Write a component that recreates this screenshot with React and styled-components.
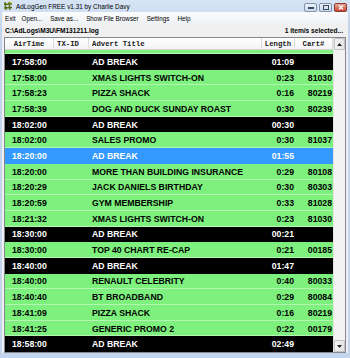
import styled, { createGlobalStyle } from "styled-components";

const GlobalStyle = createGlobalStyle`
  html, body {
    margin: 0;
    padding: 0;
    width: 350px;
    height: 358px;
    overflow: hidden;
    background: #c2d5ec;
  }
  * {
    box-sizing: border-box;
  }
`;

const COLS = "49px 35px 173px 33px 38px";

const Window = styled.div`
  width: 350px;
  height: 358px;
  display: flex;
  flex-direction: column;
  background: linear-gradient(#d7e4f4, #c2d5ec 30px);
  padding: 0 3px 5px;
  font-family: "Liberation Sans", Arial, sans-serif;
`;

const TitleBar = styled.div`
  height: 13px;
  display: flex;
  align-items: center;
  gap: 3px;
  padding-left: 0;
`;

const Title = styled.span`
  font-size: 6.4px;
  color: #000;
  flex: 1;
  white-space: nowrap;
`;

const Controls = styled.div`
  display: flex;
  gap: 2px;
  align-self: flex-start;
  padding-top: 3px;
  margin-right: 0;
`;

const CtlButton = styled.div`
  width: 13px;
  height: 9px;
  border: 1px solid ${(p) => (p.$close ? "#8c3b30" : "#7f93ad")};
  border-radius: 2px;
  background: ${(p) =>
    p.$close
      ? "linear-gradient(#e9a99a, #c8452f)"
      : "linear-gradient(#eef3fa, #c9d8ea)"};
  display: flex;
  align-items: center;
  justify-content: center;
`;

const Body = styled.div`
  flex: 1;
  display: flex;
  flex-direction: column;
  background: #f0f0f0;
  margin: 0 -1px;
  padding: 0 1px;
`;

const MenuBar = styled.div`
  height: 12px;
  display: flex;
  align-items: center;
  background: linear-gradient(#fbfcfd, #eef1f5);
  font-size: 6.3px;
  color: #000;
`;

const MenuItem = styled.span`
  padding: 0 ${(p) => p.$pad || 4}px;
  white-space: nowrap;
`;

const PathBar = styled.div`
  height: 13px;
  display: flex;
  align-items: center;
  justify-content: space-between;
  padding: 0 4px 0 2px;
  font-size: 6.6px;
  font-weight: bold;
  color: #000;
`;

const ListFrame = styled.div`
  flex: 1;
  margin: 0 1px 0 1px;
  border: 1px solid #828790;
  background: #fff;
  display: flex;
  overflow: hidden;
`;

const ListMain = styled.div`
  width: 328px;
  display: flex;
  flex-direction: column;
`;

const Header = styled.div`
  height: 12px;
  display: grid;
  grid-template-columns: ${COLS};
  background: linear-gradient(#ffffff, #f3f4f6);
  border-bottom: 1px solid #d5d5d5;
`;

const HeadCell = styled.div`
  display: flex;
  align-items: center;
  justify-content: ${(p) => (p.$center ? "center" : "flex-start")};
  padding-left: ${(p) => (p.$center ? 0 : 3)}px;
  border-right: 1px solid #dcdcdc;
  font-family: "Liberation Mono", "DejaVu Sans Mono", monospace;
  font-weight: bold;
  font-size: 7.3px;
  color: #1a1a1a;
  white-space: nowrap;
`;

const Rows = styled.div`
  flex: 1;
  overflow: hidden;
`;

const ROW_BG = { ad: "#7ef07e", break: "#000", selected: "#3399ff" };

const Row = styled.div`
  height: 15.7px;
  display: grid;
  grid-template-columns: ${COLS};
  align-items: center;
  background: ${(p) => ROW_BG[p.$kind]};
  color: ${(p) => (p.$kind === "ad" ? "#000" : "#fff")};
  box-shadow: ${(p) =>
    p.$kind === "ad" ? "inset 0 -1px 0 #b2f6b2" : "none"};
  font-weight: bold;
  font-size: 8.7px;
  white-space: nowrap;
  &:first-child {
    margin-top: -11.7px;
  }
`;

const Cell = styled.div`
  overflow: hidden;
  text-align: ${(p) => p.$align || "left"};
  padding: ${(p) => p.$pad || "0"};
`;

const Scrollbar = styled.div`
  flex: 1;
  display: flex;
  flex-direction: column;
  background: #f3f3f3;
  border-left: 1px solid #e3e3e3;
`;

const ScrollTrack = styled.div`
  flex: 1;
`;

const ArrowButton = styled.div`
  height: 12px;
  display: flex;
  align-items: center;
  justify-content: center;
  background: linear-gradient(90deg, #f4f4f4, #e3e3e3);
  border: 1px solid #c3c3c3;
  border-radius: 1px;
`;

const rows = [
  { time: "17:57:29", title: "CHRISTMAS AT THE ARNDALE 250x16 30", len: "0:31", cart: "80107", kind: "ad" },
  { time: "17:58:00", title: "AD BREAK", len: "01:09", kind: "break" },
  { time: "17:58:00", title: "XMAS LIGHTS SWITCH-ON", len: "0:23", cart: "81030", kind: "ad" },
  { time: "17:58:23", title: "PIZZA SHACK", len: "0:16", cart: "80219", kind: "ad" },
  { time: "17:58:39", title: "DOG AND DUCK SUNDAY ROAST", len: "0:30", cart: "80239", kind: "ad" },
  { time: "18:02:00", title: "AD BREAK", len: "00:30", kind: "break" },
  { time: "18:02:00", title: "SALES PROMO", len: "0:30", cart: "81037", kind: "ad" },
  { time: "18:20:00", title: "AD BREAK", len: "01:55", kind: "selected" },
  { time: "18:20:00", title: "MORE THAN BUILDING INSURANCE", len: "0:29", cart: "80108", kind: "ad" },
  { time: "18:20:29", title: "JACK DANIELS BIRTHDAY", len: "0:30", cart: "80303", kind: "ad" },
  { time: "18:20:59", title: "GYM MEMBERSHIP", len: "0:33", cart: "81028", kind: "ad" },
  { time: "18:21:32", title: "XMAS LIGHTS SWITCH-ON", len: "0:23", cart: "81030", kind: "ad" },
  { time: "18:30:00", title: "AD BREAK", len: "00:21", kind: "break" },
  { time: "18:30:00", title: "TOP 40 CHART RE-CAP", len: "0:21", cart: "00185", kind: "ad" },
  { time: "18:40:00", title: "AD BREAK", len: "01:47", kind: "break" },
  { time: "18:40:00", title: "RENAULT CELEBRITY", len: "0:40", cart: "80033", kind: "ad" },
  { time: "18:40:40", title: "BT BROADBAND", len: "0:29", cart: "80084", kind: "ad" },
  { time: "18:41:09", title: "PIZZA SHACK", len: "0:16", cart: "80219", kind: "ad" },
  { time: "18:41:25", title: "GENERIC PROMO 2", len: "0:22", cart: "00179", kind: "ad" },
  { time: "18:58:00", title: "AD BREAK", len: "02:49", kind: "break" },
];

const AppIcon = () => (
  <svg width="10" height="10" viewBox="0 0 10 10">
    <path d="M2 1 L3 9 M6 1 L7 9 M1 3.5 L9 3 M1 7 L9 6.5" stroke="#5c6b12" strokeWidth="1.4" />
    <path d="M7 1 L9 2" stroke="#e0c020" strokeWidth="1.2" />
  </svg>
);

export default function App() {
  return (
    <>
      <GlobalStyle />
      <Window>
        <TitleBar>
          <AppIcon />
          <Title>AdLogGen FREE v1.31 by Charlie Davy</Title>
          <Controls>
            <CtlButton>
              <svg width="6" height="3" viewBox="0 0 6 3">
                <rect x="0" y="1" width="6" height="2" fill="#3a4a60" />
              </svg>
            </CtlButton>
            <CtlButton>
              <svg width="6" height="5" viewBox="0 0 6 5">
                <rect x="0.5" y="0.5" width="5" height="4" fill="none" stroke="#3a4a60" />
              </svg>
            </CtlButton>
            <CtlButton $close>
              <svg width="6" height="5" viewBox="0 0 6 5">
                <path d="M1 0.5 L5 4.5 M5 0.5 L1 4.5" stroke="#fff" strokeWidth="1.3" />
              </svg>
            </CtlButton>
          </Controls>
        </TitleBar>
        <Body>
          <MenuBar>
            <MenuItem $pad={2}>Exit</MenuItem>
            <MenuItem>Open...</MenuItem>
            <MenuItem>Save as...</MenuItem>
            <MenuItem>Show File Browser</MenuItem>
            <MenuItem>Settings</MenuItem>
            <MenuItem>Help</MenuItem>
          </MenuBar>
          <PathBar>
            <span>C:\AdLogs\M3U\FM131211.log</span>
            <span>1 item/s selected...</span>
          </PathBar>
          <ListFrame>
            <ListMain>
              <Header>
                <HeadCell $center>AirTime</HeadCell>
                <HeadCell>TX-ID</HeadCell>
                <HeadCell>Advert Title</HeadCell>
                <HeadCell $center>Length</HeadCell>
                <HeadCell $center>Cart#</HeadCell>
              </Header>
              <Rows>
                {rows.map((r, i) => (
                  <Row key={i} $kind={r.kind}>
                    <Cell $pad="0 0 0 7px">{r.time}</Cell>
                    <Cell />
                    <Cell $pad="0 0 0 3px">{r.title}</Cell>
                    <Cell $align="right" $pad="0 1px 0 0">{r.len}</Cell>
                    <Cell $align="right" $pad="0 1px 0 0">{r.cart}</Cell>
                  </Row>
                ))}
              </Rows>
            </ListMain>
            <Scrollbar>
              <ArrowButton>
                <svg width="5" height="3" viewBox="0 0 5 3">
                  <path d="M0 3 L2.5 0 L5 3 Z" fill="#222" />
                </svg>
              </ArrowButton>
              <ScrollTrack />
              <ArrowButton>
                <svg width="5" height="3" viewBox="0 0 5 3">
                  <path d="M0 0 L2.5 3 L5 0 Z" fill="#222" />
                </svg>
              </ArrowButton>
            </Scrollbar>
          </ListFrame>
        </Body>
      </Window>
    </>
  );
}
